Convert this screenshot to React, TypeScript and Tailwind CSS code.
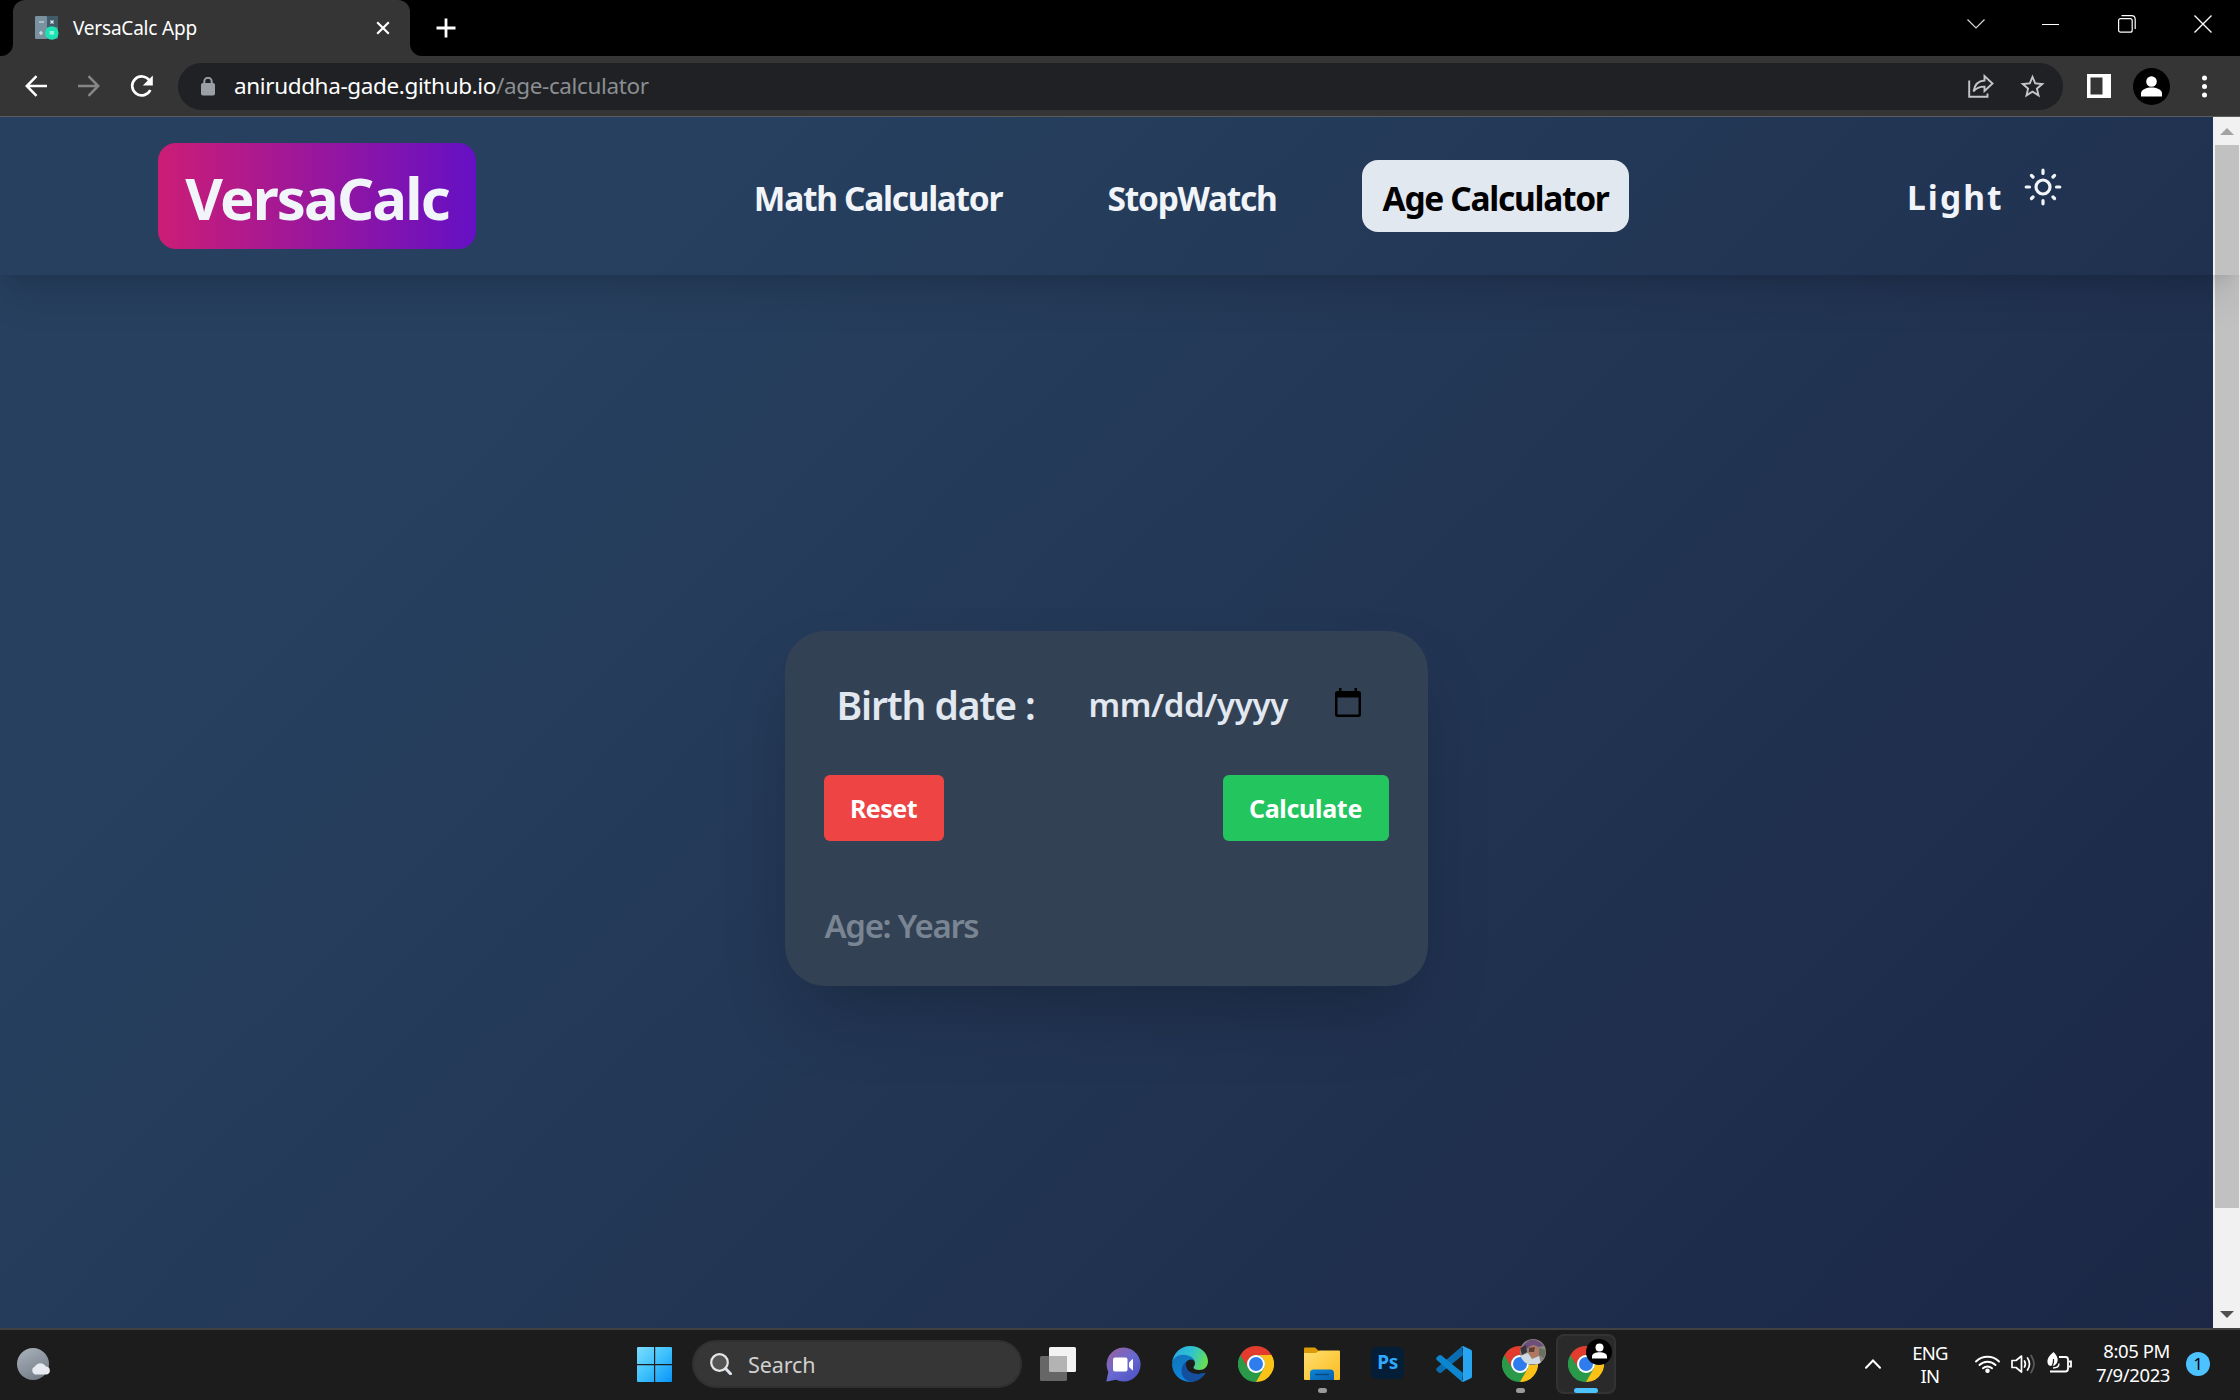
import React from "react";

const UI = "font-['Noto_Sans','Open_Sans',sans-serif]";

function ChromeLogo() {
  const arm = "M18 9H33.6A18 18 0 0 0 2.4 9L10.2 22.5A9 9 0 0 1 18 9Z";
  return (
    <svg className="size-9 shrink-0" viewBox="0 0 36 36">
      <circle cx="18" cy="18" r="17.6" fill="#2a9a4a" />
      <path d={arm} fill="#2a9a4a" transform="rotate(240 18 18)" />
      <path d={arm} fill="#fbc116" transform="rotate(120 18 18)" />
      <path d={arm} fill="#e33b2e" />
      <circle cx="18" cy="18" r="9" fill="#fff" />
      <circle cx="18" cy="18" r="7" fill="#2f7cee" />
    </svg>
  );
}

function EdgeLogo() {
  return (
    <svg className="size-9 shrink-0" viewBox="0 0 36 36">
      <defs>
        <linearGradient id="edgeTop" x1="0" y1="0.3" x2="1" y2="0.6">
          <stop offset="0" stopColor="#2aa9e6" />
          <stop offset="0.5" stopColor="#2fc3cf" />
          <stop offset="1" stopColor="#6ae04e" />
        </linearGradient>
        <linearGradient id="edgeLeft" x1="0" y1="0" x2="0.4" y2="1">
          <stop offset="0" stopColor="#1173b8" />
          <stop offset="1" stopColor="#0f86de" />
        </linearGradient>
      </defs>
      <path d="M0 17C1 7 9 0 18 0c11 0 18 7.500 18 15.500 0 5-4 8.500-8.500 8.500-4 0-6-1.400-6-2.600 0-1 1.500-1.500 1.500-4.200 0-4-5-7.700-11-7.700C6.500 9.500 1.500 12 0 17Z" fill="url(#edgeTop)" />
      <path d="M0 18C.5 12 6 8.800 11.500 8.800c6.500 0 11.500 4 11.500 8.200 0-2.500-2.500-3.700-4.500-3.500-4 .5-6 4-6 8.500 0 7 5.500 13 10 13.300A18 18 0 0 1 0 18Z" fill="url(#edgeLeft)" />
      <path d="M14.500 15.500c-1.500 4 0 11 9 12.300 4.500.6 8-1.300 9.500-1 .6.200.5.800.2 1.200C29.500 33 24 36 19 36c-6.500-1.500-9.500-6-9.500-11.500 0-4 2-7.500 5-9Z" fill="#134f9c" />
    </svg>
  );
}

function FolderIcon() {
  return (
    <svg className="h-[34px] w-9 shrink-0" viewBox="0 0 36 34">
      <defs>
        <linearGradient id="folder" x1="0" y1="0" x2="1" y2="1">
          <stop offset="0" stopColor="#ffdf70" />
          <stop offset="1" stopColor="#fbbb1d" />
        </linearGradient>
        <linearGradient id="folderBlue" x1="0" y1="0" x2="1" y2="1">
          <stop offset="0" stopColor="#0c85d8" />
          <stop offset="1" stopColor="#0a60ab" />
        </linearGradient>
      </defs>
      <path d="M0 1.500Q0 .5 1 .5H11L15 4V7H0Z" fill="#dc9b04" />
      <path d="M0 6H12L15.500 3.500H35Q36 3.500 36 4.500V32Q36 33 35 33H1Q0 33 0 32Z" fill="url(#folder)" />
      <path d="M6 33V26Q6 22.500 9.500 22.500H26.500Q30 22.500 30 26V33Z" fill="url(#folderBlue)" />
      <path d="M11 27.500H25" stroke="#0a4a86" strokeWidth="1.500" />
    </svg>
  );
}

function VsCodeIcon() {
  return (
    <svg className="size-9 shrink-0" viewBox="0 0 36 36">
      <path d="M27 9 5.500 26.500Q4 27.600 2.600 26.400L.6 24.500Q-.5 23.300.8 22.100L26 .3Z" fill="#0b6db0" />
      <path d="M27 27 5.500 9.500Q4 8.400 2.600 9.600L.6 11.500Q-.5 12.700.8 13.900L26 35.700Z" fill="#0c86cf" />
      <path d="M27 0 35 3.700Q36 4.300 36 5.500V30.500Q36 31.700 35 32.300L27 36 25.500 35Q27 35 27 33V3Q27 1 25.500 1Z" fill="#27a5f0" />
    </svg>
  );
}

function ChatIcon() {
  return (
    <svg className="h-[35px] w-[35px] shrink-0" viewBox="0 0 35 35">
      <defs>
        <linearGradient id="chat" x1="0.1" y1="0.2" x2="0.7" y2="0.9">
          <stop offset="0" stopColor="#8e62a8" />
          <stop offset="0.5" stopColor="#6a6ad0" />
          <stop offset="1" stopColor="#5558c8" />
        </linearGradient>
      </defs>
      <path d="M17.500.5A17 17 0 1 1 10 32.700L1 34.500Q.3 34.500.5 33.500L2.300 25A17 17 0 0 1 17.500.5Z" fill="url(#chat)" />
      <rect x="7" y="10.500" width="14.500" height="14" rx="2" fill="#fff" />
      <path d="M23 15.500 26.500 12Q27 11.800 27 12.500V23Q27 23.600 26.500 23.300L23 20Z" fill="#fff" />
    </svg>
  );
}

function TabStrip() {
  return (
    <div className="flex h-14 shrink-0 bg-black">
      <svg className="mt-11 ml-[1px] size-3 shrink-0" viewBox="0 0 12 12">
        <path d="M12 0V12H0A12 12 0 0 0 12 0Z" fill="#353535" />
      </svg>
      <div className="flex h-14 w-[397px] shrink-0 items-center rounded-t-xl bg-[#353535] pl-[22px]">
        <svg className="h-6 w-6 shrink-0" viewBox="0 0 24 24">
          <rect x="0" y="0" width="23" height="23" rx="1.500" fill="#5d7684" />
          <rect x="0" y="0" width="12" height="23" rx="1.500" fill="#7a929f" />
          <rect x="12" y="0" width="11" height="11" fill="#425b68" />
          <path d="M4 6H9M4 17H8M6 15V19M15.500 4.500 18.500 7.500M18.500 4.500 15.500 7.500" stroke="#dfe7ea" strokeWidth="1.200" />
          <circle cx="16.800" cy="17" r="6.700" fill="#1de2b4" />
          <rect x="14.500" y="15" width="4.600" height="3.600" fill="#8ff3db" />
        </svg>
        <span className="ml-[14px] w-[303px] text-[19px] leading-6 tracking-[-0.200px] text-white">VersaCalc App</span>
        <svg className="size-[14px] shrink-0" viewBox="0 0 14 14">
          <path d="M1.200 1.200 12.800 12.800M12.800 1.200 1.200 12.800" stroke="#fff" strokeWidth="2.200" />
        </svg>
      </div>
      <svg className="mt-11 size-3 shrink-0" viewBox="0 0 12 12">
        <path d="M0 0V12H12A12 12 0 0 1 0 0Z" fill="#353535" />
      </svg>
      <svg className="mt-[18px] ml-[14px] size-5 shrink-0" viewBox="0 0 20 20">
        <path d="M10 .5V19.500M.5 10H19.500" stroke="#fff" strokeWidth="2.800" />
      </svg>
      <div className="mt-[15px] mr-[28px] ml-auto flex h-[18px] items-center">
        <svg className="h-[10px] w-[18px]" viewBox="0 0 18 10">
          <path d="M.5.5 9 9 17.500.5" stroke="#d8d8d8" strokeWidth="1.200" fill="none" />
        </svg>
        <div className="ml-[57px] h-px w-[17px] bg-white" />
        <svg className="ml-[59px] size-[18px]" viewBox="0 0 18 18" fill="none" stroke="#fff" strokeWidth="1.200">
          <rect x="0.600" y="3.600" width="13.600" height="13.600" rx="2" />
          <path d="M3.500.7H13.500Q17.200.7 17.200 4.500V14" />
        </svg>
        <svg className="ml-[58px] size-[18px]" viewBox="0 0 18 18">
          <path d="M.5.5 17.500 17.500M17.500.5.5 17.500" stroke="#fff" strokeWidth="1.300" />
        </svg>
      </div>
    </div>
  );
}

function Toolbar() {
  return (
    <div className="flex h-[61px] shrink-0 items-center border-b border-[#5c5c5c] bg-[#353535] pl-[25px]">
      <svg className="size-[22px] shrink-0" viewBox="0 0 22 22" fill="none" stroke="#fff" strokeWidth="2.500">
        <path d="M22 11H2M11.500 1.200 1.800 11 11.500 20.800" />
      </svg>
      <svg className="ml-[31px] size-[22px] shrink-0" viewBox="0 0 22 22" fill="none" stroke="#868686" strokeWidth="2.500">
        <path d="M0 11H20M10.500 1.200 20.200 11 10.500 20.800" />
      </svg>
      <svg className="ml-[30px] h-[23px] w-6 shrink-0" viewBox="0 0 24 23">
        <path d="M19.500 5.500A9.500 9.500 0 1 0 20.300 15" fill="none" stroke="#fff" strokeWidth="2.700" />
        <path d="M22.800.5V10.500H12.800Z" fill="#fff" />
      </svg>
      <div className="ml-6 flex h-[47px] w-[1885px] shrink-0 items-center rounded-full bg-[#202124] pl-[23px]">
        <svg className="h-[19px] w-[14px] shrink-0" viewBox="0 0 14 19">
          <rect x="0" y="6" width="14" height="12.500" rx="1.800" fill="#9aa0a6" />
          <path d="M3.300 7V4.500A3.700 3.700 0 0 1 10.700 4.500V7" fill="none" stroke="#9aa0a6" strokeWidth="2" />
        </svg>
        <span className="ml-[19px] text-[22.500px] leading-8 tracking-[-0.370px] text-white">
          aniruddha-gade.github.io<span className="text-[#8b8e92]">/age-calculator</span>
        </span>
        <svg className="ml-auto h-6 w-[26px] shrink-0" viewBox="0 0 26 24" fill="none" stroke="#c4c5c6" strokeWidth="1.900">
          <path d="M1.200 6.500V22.800H19.500V19.500" />
          <path d="M5.500 17.500C6.500 11 10.500 6.800 16.500 6.500V2L24.500 9.500 16.500 17V12.600C11.500 12.600 8 14 5.500 17.500Z" />
        </svg>
        <svg className="mr-[16px] ml-[24px] size-[29px] shrink-0" viewBox="0 0 24 24">
          <path fill="#c4c5c6" d="M22 9.240l-7.190-.62L12 2 9.190 8.630 2 9.240l5.460 4.730L5.820 21 12 17.270 18.180 21l-1.630-7.030L22 9.240zM12 15.400l-3.760 2.270 1-4.280-3.320-2.880 4.380-.38L12 6.100l1.710 4.040 4.380.38-3.320 2.880 1 4.280L12 15.400z" />
        </svg>
      </div>
      <svg className="ml-6 size-6 shrink-0" viewBox="0 0 24 24">
        <path d="M0 0H24V24H0ZM3.500 3.500V20.500H15.500V3.500Z" fill="#fff" fillRule="evenodd" />
      </svg>
      <svg className="ml-[22px] size-[37px] shrink-0" viewBox="0 0 37 37">
        <circle cx="18.500" cy="18.500" r="18.500" fill="#000" />
        <circle cx="18.500" cy="13.500" r="5.300" fill="#fff" />
        <path d="M8 28.500V25.500C8 21.500 14 19.600 18.500 19.600S29 21.500 29 25.500V28.500Z" fill="#fff" />
      </svg>
      <svg className="ml-8 h-[23px] w-[5px] shrink-0" viewBox="0 0 5 23" fill="#fff">
        <circle cx="2.500" cy="3" r="2.500" />
        <circle cx="2.500" cy="11.500" r="2.500" />
        <circle cx="2.500" cy="20" r="2.500" />
      </svg>
    </div>
  );
}

function Header() {
  return (
    <header className="flex h-[158px] w-[2240px] shrink-0 items-start self-start pl-[158px] font-bold text-[#f1f5f9] shadow-[0_30px_38px_-8px_rgba(0,0,0,0.1),0_12px_15px_-9px_rgba(0,0,0,0.1)]">
      <div className="mt-[26px] flex h-[106px] w-[318px] shrink-0 items-center justify-center rounded-[18px] bg-[linear-gradient(to_right,#cc1d76,#6510c4)] pt-[3px]">
        <span className="text-[58px] leading-[80px] tracking-[-1.850px]">VersaCalc</span>
      </div>
      <nav className="mt-[43px] ml-[258px] flex h-[72px] w-[895px] shrink-0 items-center text-[33.500px] leading-[44px] tracking-[-1.300px] whitespace-nowrap">
        <a className="flex h-full w-[288px] items-center justify-center rounded-2xl pt-[3px]">Math Calculator</a>
        <a className="ml-[65px] flex h-full w-[210px] items-center justify-center rounded-2xl pt-[3px]">StopWatch</a>
        <a className="ml-[65px] flex h-full w-[267px] items-center justify-center rounded-2xl bg-[#e2e8f0] pt-[3px] text-black">Age Calculator</a>
      </nav>
      <span className="mt-[58px] ml-[278px] w-[117px] text-[33.500px] leading-[44px] tracking-[2.100px]">Light</span>
      <svg className="mt-[51px] size-[38px] shrink-0" viewBox="0 0 38 38" fill="none" stroke="#f1f5f9" strokeWidth="3.200" strokeLinecap="round">
        <circle cx="19" cy="19" r="7" />
        <path d="M19 2.200V5.500M19 32.500V35.800M2.200 19H5.500M32.500 19H35.800M7.500 7.500 9 9M29 29 30.500 30.500M7.500 30.500 9 29M29 9 30.500 7.500" />
      </svg>
    </header>
  );
}

function AgeCard() {
  return (
    <section className="flex h-[355px] w-[643px] flex-col rounded-[40px] bg-[#334155] px-[39px] shadow-[0_37px_75px_-18px_rgba(0,0,0,0.25)]">
      <div className="mt-[44px] flex h-[60px] items-center pl-[13px] font-semibold text-[#e2e8f0]">
        <span className="w-[252px] text-[39px] leading-[60px] tracking-[-1.100px] whitespace-nowrap">Birth date :</span>
        <span className="w-[246px] text-[33px] leading-[60px] tracking-[-0.400px]">mm/dd/yyyy</span>
        <svg className="mb-[6px] h-[29px] w-[26px] shrink-0" viewBox="0 0 26 29">
          <path d="M4 0H6.500V3H19.500V0H22V3H23.500Q26 3 26 5.500V26.500Q26 29 23.500 29H2.500Q0 29 0 26.500V5.500Q0 3 2.500 3H4ZM2.500 9.500V26.500H23.500V9.500Z" fill="#000" fillRule="evenodd" />
        </svg>
      </div>
      <div className="mt-[40px] flex h-[66px] items-center justify-between text-[25px] leading-9 font-bold text-white">
        <button className="h-full w-[120px] rounded-md bg-[#ef4444] tracking-[-0.500px]">Reset</button>
        <button className="h-full w-[166px] rounded-md bg-[#22c55e] tracking-[-0.300px]">Calculate</button>
      </div>
      <p className="mt-[63px] pl-px text-[33px] leading-[44px] font-semibold tracking-[-1.350px] text-[#798593]">Age: Years</p>
    </section>
  );
}

function Scrollbar() {
  return (
    <div className="flex w-[27px] shrink-0 flex-col items-center bg-[#f1f1f1] pt-[11px] pb-[10px]">
      <svg className="h-[7px] w-[14px]" viewBox="0 0 14 7">
        <path d="M0 7 7 0 14 7Z" fill="#a3a3a3" />
      </svg>
      <div className="mt-[10px] h-[1063px] w-6 bg-[#c1c1c1]" />
      <svg className="mt-auto h-[7px] w-[14px]" viewBox="0 0 14 7">
        <path d="M0 0 7 7 14 0Z" fill="#505050" />
      </svg>
    </div>
  );
}

function RunningApp({ children, active = false }: { children: React.ReactNode; active?: boolean }) {
  return (
    <div className={active ? "relative flex h-[60px] w-[60px] shrink-0 justify-center rounded-lg border-2 border-[#333] bg-[#2a2a2a] pt-[10px]" : "relative flex h-[60px] w-[60px] shrink-0 justify-center pt-3"}>
      {children}
      <span className={active ? "absolute bottom-[-1px] h-[5px] w-6 rounded-full bg-[#4cc2ff]" : "absolute bottom-[1px] h-[5px] w-[9px] rounded-full bg-[#9a9a9a]"} />
    </div>
  );
}

function Taskbar() {
  return (
    <footer className="flex h-[72px] shrink-0 items-center border-t-2 border-[#414141] bg-[#1c1c1c] pb-[2px] pl-[17px]">
      <svg className="h-8 w-[34px] shrink-0" viewBox="0 0 34 32">
        <defs>
          <linearGradient id="moon" x1="0.2" y1="0" x2="0.7" y2="1">
            <stop offset="0" stopColor="#a7b0b9" />
            <stop offset="1" stopColor="#747d87" />
          </linearGradient>
        </defs>
        <circle cx="16" cy="16" r="16" fill="url(#moon)" />
        <path d="M18 26.500A4.300 4.300 0 0 1 17.800 18.500 6.500 6.500 0 0 1 29 18.500 4.100 4.100 0 0 1 30 26.500Z" fill="#e7eaf0" />
      </svg>
      <svg className="ml-[586px] size-[35px] shrink-0" viewBox="0 0 35 35">
        <defs>
          <linearGradient id="win" x1="0" y1="0" x2="1" y2="1">
            <stop offset="0" stopColor="#7cdcff" />
            <stop offset="0.500" stopColor="#3ec1fb" />
            <stop offset="1" stopColor="#0a93fa" />
          </linearGradient>
        </defs>
        <path d="M0 1Q0 0 1 0H17V17H0ZM18.200 0H34Q35 0 35 1V17H18.200ZM0 18.200H17V35H1Q0 35 0 34ZM18.200 18.200H35V34Q35 35 34 35H18.200Z" fill="url(#win)" />
      </svg>
      <div className="ml-5 flex h-12 w-[330px] shrink-0 items-center rounded-full border-2 border-[#303030] bg-[#363636] pl-4">
        <svg className="size-[22px] shrink-0" viewBox="0 0 22 22" fill="none">
          <circle cx="9.500" cy="9.500" r="8.300" fill="#555" stroke="#e6e6e6" strokeWidth="2.200" />
          <path d="M15.500 15.500 20.500 20.800" stroke="#dfe3ea" strokeWidth="3" strokeLinecap="round" />
        </svg>
        <span className="mt-0.5 ml-4 text-[21.500px] leading-7 tracking-[-0.100px] text-[#d0d0d0]">Search</span>
      </div>
      <svg className="ml-[18px] h-[34px] w-9 shrink-0" viewBox="0 0 36 34">
        <rect x="9" y="0" width="27" height="25" rx="1.500" fill="#f3f3f3" />
        <rect x="0" y="9" width="27" height="25" rx="1.500" fill="#666" />
        <path d="M9 9H27V25H10.500Q9 25 9 23.500Z" fill="#b3b3b3" />
      </svg>
      <div className="ml-[30px]"><ChatIcon /></div>
      <div className="ml-[31px]"><EdgeLogo /></div>
      <div className="ml-[30px]"><ChromeLogo /></div>
      <div className="ml-[18px]"><RunningApp><div className="pt-px"><FolderIcon /></div></RunningApp></div>
      <div className="mb-[3px] ml-[19px] flex h-[32px] w-[33px] shrink-0 items-center justify-center rounded-[6px] bg-[#031e36] text-[19px] leading-none font-bold tracking-[-0.500px] text-[#31a8ff]">Ps</div>
      <div className="ml-[32px]"><VsCodeIcon /></div>
      <div className="ml-[18px]">
        <RunningApp>
          <ChromeLogo />
          <svg className="absolute top-[5px] left-[30px] size-[26px]" viewBox="0 0 26 26">
            <defs>
              <clipPath id="avatar">
                <circle cx="13" cy="13" r="13" />
              </clipPath>
            </defs>
            <g clipPath="url(#avatar)">
              <rect width="26" height="26" fill="#8d8680" />
              <path d="M3 7Q12-6 24 7L18 8Q13 4 8 9L3 11Z" fill="#6d4f7c" />
              <path d="M0 9 6 6 7 13 2 16Z" fill="#37343a" />
              <path d="M8 10Q13 3 18 9L19 16 14 20 9 15Z" fill="#b0785f" />
              <path d="M9 9 15 8 14 13 9 13Z" fill="#5c3d38" />
              <path d="M0 17 8 14 12 20 19 17 21 25H2Z" fill="#cfd9e2" />
              <path d="M19 9 26 11 24 19 19 16Z" fill="#6b6f60" />
            </g>
          </svg>
        </RunningApp>
      </div>
      <div className="ml-[6px]">
        <RunningApp active>
          <ChromeLogo />
          <svg className="absolute top-[3px] left-[28px] size-[26px]" viewBox="0 0 26 26">
            <circle cx="13" cy="13" r="13" fill="#000" />
            <circle cx="13.500" cy="8.500" r="4" fill="#fff" />
            <path d="M6 19.500V17.500C6 14.500 10 13.300 13.500 13.300S21 14.500 21 17.500V19.500Z" fill="#fff" />
          </svg>
        </RunningApp>
      </div>
      <svg className="ml-[249px] h-[10px] w-4 shrink-0" viewBox="0 0 16 10">
        <path d="M1 8.800 8 1.500 15 8.800" fill="none" stroke="#fff" strokeWidth="2" strokeLinecap="round" />
      </svg>
      <div className="ml-[28px] w-[42px] shrink-0 text-center text-[18.500px] leading-[23px] tracking-[-0.700px] text-white">ENG<br />IN</div>
      <svg className="ml-[24px] h-[18px] w-[25px] shrink-0" viewBox="0 0 25 18" fill="none" stroke="#fff" strokeWidth="1.900" strokeLinecap="round">
        <path d="M1 6.500A16.300 16.300 0 0 1 24 6.500M4.500 10A11.300 11.300 0 0 1 20.500 10M8 13.300A6.500 6.500 0 0 1 17 13.300" />
        <circle cx="12.500" cy="15.800" r="1.300" fill="#fff" />
      </svg>
      <svg className="ml-[11px] h-5 w-[25px] shrink-0" viewBox="0 0 25 20" fill="none" stroke="#fff" strokeWidth="1.700" strokeLinecap="round" strokeLinejoin="round">
        <path d="M1 6.500V13.500H5L10.500 18V2L5 6.500ZM13.500 7Q15.300 10 13.500 13M16.500 4Q20.500 10 16.500 16" />
        <path d="M20 1.500Q26 10 20 18.500" stroke="#5a5a5a" />
      </svg>
      <svg className="mb-[3px] ml-[11px] h-[21px] w-[25px] shrink-0" viewBox="0 0 25 21">
        <path d="M12 5H18.500Q21 5 21 7.500V16.500Q21 19.500 18.500 19.500H3M22 9.500H24V14.500H22" fill="none" stroke="#fff" strokeWidth="1.800" />
        <path d="M6.500 0C10.500 4 12 8 9.500 11.500Q8 14 4.500 14 1 14 .5 10.500C0 6 3 3 6.500 0Z" fill="#fff" />
        <path d="M6.500 7Q7 12 3.500 16" fill="none" stroke="#1c1c1c" strokeWidth="1.200" />
        <path d="M12 11.500Q12 16 6 16" fill="none" stroke="#fff" strokeWidth="1.400" />
      </svg>
      <div className="mr-[16px] mb-[3px] ml-auto text-right text-[18.500px] leading-6 tracking-[-0.400px] text-white">8:05 PM<br />7/9/2023</div>
      <div className="mr-[30px] flex size-6 shrink-0 items-center justify-center rounded-full bg-[#4cc2ff] text-[17px] text-black">1</div>
    </footer>
  );
}

export default function App() {
  return (
    <div className={`${UI} flex h-[1400px] w-[2240px] flex-col overflow-hidden`}>
      <TabStrip />
      <Toolbar />
      <div className="flex h-[1211px] shrink-0 overflow-hidden">
        <main className="relative z-10 flex w-[2213px] shrink-0 flex-col items-center bg-[linear-gradient(135deg,#27405f_22%,#1b2745_100%)]">
          <Header />
          <div className="mt-[356px] mr-[1px]">
            <AgeCard />
          </div>
        </main>
        <Scrollbar />
      </div>
      <Taskbar />
    </div>
  );
}
